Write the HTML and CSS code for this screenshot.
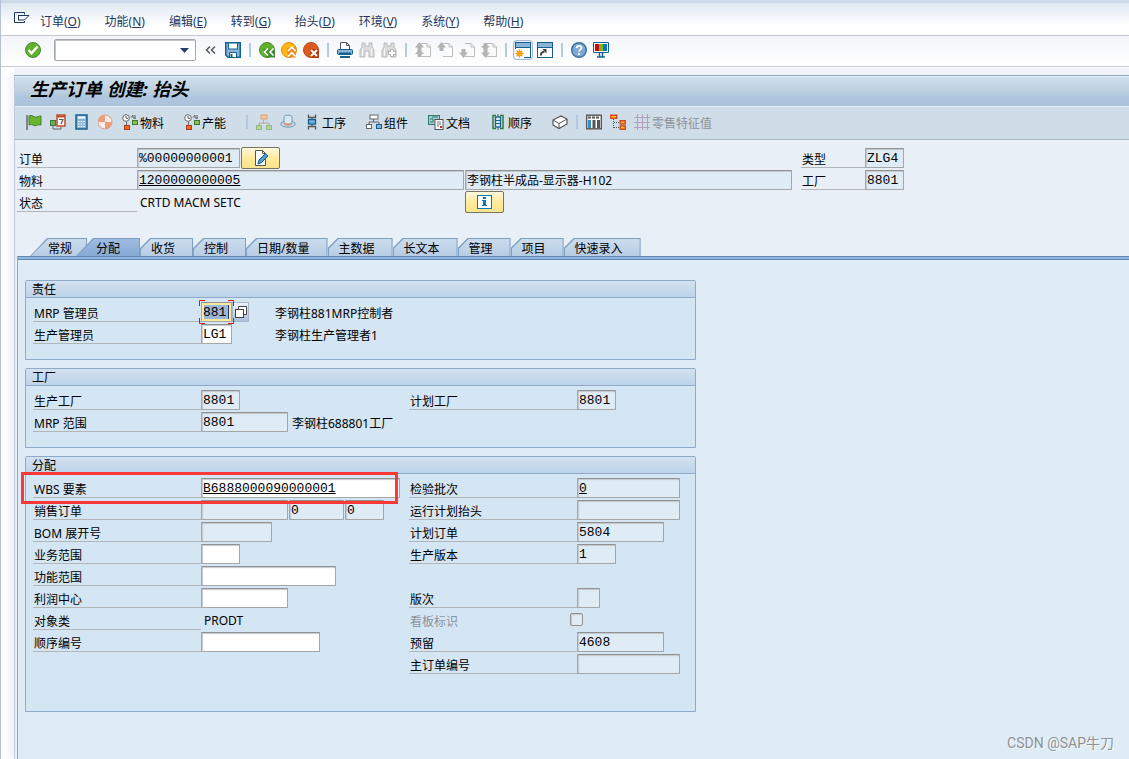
FILE: index.html
```html
<!DOCTYPE html>
<html lang="zh-CN">
<head>
<meta charset="utf-8">
<title>生产订单 创建: 抬头</title>
<link rel="stylesheet" href="styles.css">
</head>
<body>
<svg class="defs" width="0" height="0" aria-hidden="true">
  <defs>
    <g id="i-binoc"><path d="M3 1h3v3h4V1h3v4l2 3v7h-5V9H6v6H1V8l2-3z" fill="#dcdcdc" stroke="#b9b9b9"/><path d="M3.500 6v8M12.500 6v8" stroke="#f4f4f4"/></g>
    <g id="i-page"><path d="M6 1.500h6l3.500 3.500v9.500H6M12 1.500V5h3.500" fill="#fafafa" stroke="#bdbdbd"/></g>
    <g id="i-up"><path d="M4.500 0L9 5.500H6.500V9h-4V5.500H0z" fill="#b4b4b4"/></g>
    <g id="i-down"><path d="M4.500 16L0 10.500h2.500V7h4v3.500H9z" fill="#b4b4b4"/></g>
    <g id="i-capacity"><circle cx="4" cy="4" r="3.300" fill="#fff" stroke="#666"/><path d="M4 2v2.300h2" fill="none" stroke="#555"/><path d="M9 3.500l2-2.500v3M13 1v4M11 4h3M4.500 8v3" fill="none" stroke="#666"/><rect x="10.500" y="6.500" width="5" height="4" fill="#8bc34a" stroke="#3d7a33"/><rect x="2.500" y="11.500" width="5" height="4" fill="#f26a2a" stroke="#b03a12"/></g>
  </defs>
</svg>

<nav class="menubar" aria-label="菜单">
  <button class="icon-btn system" aria-label="系统菜单"><svg width="16" height="14"><path d="M10.500 2.500v-2H.5v10h10v-1.500M4 3.500h11L10.500 8H4M4.500 3.500V8" fill="none" stroke="#23365f"/></svg></button>
  <button>订单(<u>O</u>)</button>
  <button>功能(<u>N</u>)</button>
  <button>编辑(<u>E</u>)</button>
  <button>转到(<u>G</u>)</button>
  <button>抬头(<u>D</u>)</button>
  <button>环境(<u>V</u>)</button>
  <button>系统(<u>Y</u>)</button>
  <button>帮助(<u>H</u>)</button>
</nav>

<div class="toolbar">
  <button class="icon-btn enter" aria-label="回车"><svg width="16" height="16"><circle cx="8" cy="8" r="7.500" fill="#62b12b" stroke="#4a8a35"/><path d="M3.500 8l3 3.300L12.500 4.500" fill="none" stroke="#fff" stroke-width="2.400"/></svg></button>
  <div class="command">
    <input type="text" aria-label="命令">
    <svg class="arrow" width="9" height="5"><path d="M0 0h9L4.500 5z" fill="#23406b"/></svg>
  </div>
  <button class="icon-btn" aria-label="收起"><svg width="16" height="16"><path d="M7 4.500L3.500 8 7 11.500M12 4.500L8.500 8l3.500 3.500" fill="none" stroke="#555" stroke-width="1.500"/></svg></button>
  <button class="icon-btn" aria-label="保存"><svg width="16" height="16"><path d="M.75.75h14.500v14.500H3L.75 13z" fill="#8ab4d8" stroke="#14618f" stroke-width="1.500"/><rect x="3.500" y="1" width="9" height="6" fill="#fff" stroke="#14618f"/><path d="M4.500 15v-4.500h7V15" fill="#fff" stroke="#14618f"/><path d="M6.500 12v3" stroke="#14618f" stroke-width="2"/></svg></button>
  <span class="sep"></span>
  <button class="icon-btn" aria-label="返回"><svg width="16" height="16"><circle cx="8" cy="8" r="7.500" fill="#62b12b" stroke="#4a8a35"/><path d="M4 7h12v8.500H8z" fill="#3f8a2c"/><path d="M9 6.500L5.500 10 9 13.500M14.500 6.500L11 10l3.500 3.500" fill="none" stroke="#fff" stroke-width="1.700"/></svg></button>
  <button class="icon-btn" aria-label="退出"><svg width="16" height="16"><circle cx="8" cy="8" r="7.500" fill="#fdb813" stroke="#e08a12"/><path d="M6 6l9-1v10.500H7z" fill="#ef8b1c"/><path d="M7 9l3.800-3.800L14.600 9M7 14.500l3.800-3.800 3.800 3.800" fill="none" stroke="#fff" stroke-width="1.700"/></svg></button>
  <button class="icon-btn" aria-label="取消"><svg width="16" height="16"><circle cx="8" cy="8" r="7.500" fill="#dd5a1e" stroke="#b84a1c"/><path d="M7 7h9v9H8z" fill="#b83a12"/><path d="M8 8l6 6M14 8l-6 6" stroke="#fff" stroke-width="2"/></svg></button>
  <span class="sep"></span>
  <button class="icon-btn" aria-label="打印"><svg width="16" height="16"><path d="M3.500 8V.5h6l3 3V8M9.500.5v3h3" fill="#fff" stroke="#555"/><rect x=".5" y="7.500" width="15" height="5" rx="1" fill="#8ab4d8" stroke="#14618f"/><path d="M2 11.500h12M3 15h10" stroke="#14618f" stroke-width="2"/></svg></button>
  <button class="icon-btn" aria-label="查找"><svg width="16" height="16"><use href="#i-binoc"/></svg></button>
  <button class="icon-btn" aria-label="查找下一个"><svg width="16" height="16"><use href="#i-binoc"/><path d="M11 7v8M7 11h8" stroke="#b4b4b4" stroke-width="4"/><path d="M11 8v6M8 11h6" stroke="#fff" stroke-width="2"/></svg></button>
  <span class="sep"></span>
  <button class="icon-btn" aria-label="首页"><svg width="16" height="16"><use href="#i-page"/><use href="#i-up"/><path d="M4.500 7L9 12H6.500v3h-4v-3H0z" fill="#b4b4b4"/></svg></button>
  <button class="icon-btn" aria-label="上一页"><svg width="16" height="16"><use href="#i-page"/><use href="#i-up"/></svg></button>
  <button class="icon-btn" aria-label="下一页"><svg width="16" height="16"><use href="#i-page"/><use href="#i-down"/></svg></button>
  <button class="icon-btn" aria-label="末页"><svg width="16" height="16"><use href="#i-page"/><use href="#i-down"/><path d="M4.500 9L0 4h2.500V1h4v3H9z" fill="#b4b4b4"/></svg></button>
  <span class="sep"></span>
  <button class="icon-btn framed" aria-label="新建会话"><svg width="16" height="16"><rect x=".5" y=".5" width="15" height="15" fill="#fff" stroke="#14618f"/><path d="M1 3h14" stroke="#8ab4d8" stroke-width="4"/><path d="M1 5.500h14" stroke="#14618f"/><path d="M0 7h9v9H0z" fill="#fff"/><path d="M4.500 7.500v8M.5 11.500h8M1.700 8.700l5.600 5.600M7.300 8.700l-5.600 5.600" stroke="#f39200" stroke-width="1.300"/><circle cx="4.500" cy="11.500" r="2.500" fill="#f7a600"/></svg></button>
  <button class="icon-btn" aria-label="创建快捷方式"><svg width="16" height="16"><rect x=".5" y=".5" width="15" height="15" fill="#fff" stroke="#14618f"/><path d="M1 3h14" stroke="#8ab4d8" stroke-width="4"/><path d="M1 5.500h14" stroke="#14618f"/><path d="M4 13.500c-.5-2 1-3.500 3.500-4" fill="none" stroke="#444" stroke-width="2"/><path d="M5.500 7h4v4.500z" fill="#444"/></svg></button>
  <span class="sep"></span>
  <button class="icon-btn" aria-label="帮助"><svg width="16" height="16"><circle cx="8" cy="8" r="7.300" fill="#7ea9d0" stroke="#35719f" stroke-width="1.400"/><path d="M5.500 6.300C5.500 3 10.800 3.200 10.500 6c-.2 1.700-2.500 1.600-2.500 3.500M8 11v2" fill="none" stroke="#fff" stroke-width="1.800"/></svg></button>
  <button class="icon-btn" aria-label="定制布局"><svg width="16" height="16"><path d="M.5.5h15v10H.5z" fill="#fff" stroke="#14618f"/><path d="M2 2h4v7H2z" fill="#cc0a0a"/><path d="M6 2h4v7H6z" fill="#79b51c"/><path d="M10 2h4v7h-4z" fill="#0b76c8"/><path d="M6.500 11v4M9.500 11v4M4 15h8" stroke="#14618f" stroke-width="1.500"/></svg></button>
</div>

<main class="window">
  <h1>生产订单 创建: 抬头</h1>

  <div class="appbar">
    <button aria-label="下达"><svg width="16" height="16"><path d="M1 1v15" stroke="#666" stroke-width="1.500"/><path d="M3 2c3-2 5 2 8 1 2-1 3-1 4-1v9c-4-1-5 2-8 0-2-1-3 0-4 0z" fill="#6ab52b" stroke="#3e8432"/></svg></button>
    <button aria-label="计划"><svg width="16" height="16"><path d="M3 12v3h8v-2" fill="none" stroke="#666"/><rect x=".5" y="6.500" width="5" height="5" fill="#6ab04a" stroke="#3c7a3a"/><rect x="7" y="1" width="8" height="11" fill="#fff" stroke="#c2492b" stroke-width="1.500"/><path d="M7 2.500h8" stroke="#c2492b" stroke-width="2"/><path d="M9 5.500h4L11 10" fill="none" stroke="#555" stroke-width="1.200"/></svg></button>
    <button aria-label="成本核算"><svg width="16" height="16"><rect x="2" y="1" width="11" height="14" fill="#8ab4d8" stroke="#14618f" stroke-width="1.500"/><path d="M4 3.500h7" stroke="#fff" stroke-width="2"/><path d="M4 7.500h7M4 10h7M4 12.500h7" stroke="#fff" stroke-width="1.200" stroke-dasharray="1.600 1"/></svg></button>
    <button aria-label="结算"><svg width="16" height="16"><circle cx="7" cy="8" r="7" fill="#fbeee8" stroke="#cf9a86"/><path d="M7 8H0a7 7 0 0 1 7-7zM7 8h7a7 7 0 0 1-7 7z" fill="#ec9c79"/></svg></button>
    <button class="wide"><svg width="16" height="16"><use href="#i-capacity"/></svg>物料</button>
    <button class="wide"><svg width="16" height="16"><use href="#i-capacity"/></svg>产能</button>
    <span class="sep"></span>
    <button aria-label="层次"><svg width="16" height="16"><path d="M7.500 6v3M3 12V9h10v3" fill="none" stroke="#b5aaa0"/><rect x="5" y="1" width="6" height="4" fill="#f5c79a" stroke="#dba27c"/><rect x=".5" y="11.500" width="5" height="4" fill="#b5d39b" stroke="#93bb80"/><rect x="10.500" y="11.500" width="5" height="4" fill="#b5d39b" stroke="#93bb80"/></svg></button>
    <button aria-label="抬头"><svg width="16" height="16"><ellipse cx="8" cy="10" rx="7.300" ry="3.200" fill="#c3dceb" stroke="#6d9ab8"/><path d="M4 9V3c0-2.500 8-2.500 8 0v6" fill="#d6e8f2" stroke="#6d9ab8"/><path d="M4 8.500c2 1.500 6 1.500 8 0v2c-2 1.500-6 1.500-8 0z" fill="#e08a74"/></svg></button>
    <button class="wide"><svg width="16" height="16"><path d="M8 4v9" stroke="#555"/><path d="M4.500.5v3h7v-3M4.500 15.500v-3h7v3" fill="none" stroke="#555" stroke-width="1.300"/><rect x="4.500" y="5.500" width="7" height="4.500" fill="#6eb0db" stroke="#14618f" stroke-width="1.300"/></svg>工序</button>
    <button class="wide"><svg width="16" height="16"><path d="M7.500 5v3M3 11V8h10v3" fill="none" stroke="#666"/><rect x="4" y="1" width="8" height="4" fill="#fff" stroke="#666"/><rect x=".5" y="10.500" width="5" height="4" fill="#fff" stroke="#666"/><rect x="10.500" y="10.500" width="5" height="4" fill="#7fb4da" stroke="#14618f"/></svg>组件</button>
    <button class="wide"><svg width="16" height="16"><rect x=".5" y="1.500" width="11" height="9" fill="#a9cbd3" stroke="#2f7d6c"/><path d="M2 5h3v3H2M4 3h6" fill="none" stroke="#2f7d6c"/><rect x="7" y="5.500" width="8" height="10" fill="#fff" stroke="#555"/><path d="M9 8h4M9 10h4M9 12h2" stroke="#777"/><path d="M12 13h2" stroke="#d22" stroke-width="2"/></svg>文档</button>
    <button class="wide"><svg width="16" height="16"><path d="M6 1.500H3v13h3M10 1.500h3v13h-3" fill="none" stroke="#2f7d3c" stroke-width="1.500"/><path d="M8 0v16" stroke="#555"/><rect x="5.500" y="3" width="5" height="10" fill="#dcecf6" stroke="#14618f" stroke-width="1.300"/><path d="M5.500 6.500h5M5.500 9.500h5" stroke="#14618f"/></svg>顺序</button>
    <button aria-label="物料清单"><svg width="16" height="16"><path d="M1 6l8-4 6 3v5l-8 4.500L1 11z" fill="#fff" stroke="#555" stroke-width="1.200"/><path d="M1 6l6 3.500L15 5M7 9.500v5" fill="none" stroke="#555"/></svg></button>
    <span class="sep"></span>
    <button aria-label="列表"><svg width="16" height="16"><rect x=".7" y="1.200" width="14.600" height="13.600" fill="#fff" stroke="#555" stroke-width="1.400"/><path d="M2 3.500h12" stroke="#555" stroke-width="2" stroke-dasharray="3 1"/><path d="M3.500 6v8" stroke="#3b8dbd" stroke-width="3"/><path d="M8 6v8M12.500 6v8" stroke="#555" stroke-width="3"/></svg></button>
    <button aria-label="结构"><svg width="16" height="16"><path d="M3.500 5v9M4 8.500h6M4 13.500h6" stroke="#555" stroke-dasharray="1 1"/><rect x=".7" y="1.200" width="6" height="3" fill="#fcc21b" stroke="#d2451e" stroke-width="1.400"/><rect x="10.200" y="6.700" width="5" height="3.300" fill="#fcc21b" stroke="#d2451e" stroke-width="1.400"/><rect x="10.200" y="12" width="5" height="3.300" fill="#fcc21b" stroke="#d2451e" stroke-width="1.400"/></svg></button>
    <button class="wide" disabled><svg width="16" height="16"><path d="M3.500 0v16M8.500 0v16M13.500 0v16M0 3.500h16M0 8.500h16M0 13.500h16" stroke="#b3a0bd"/></svg>零售特征值</button>
  </div>

  <section class="header">
    <div class="col">
      <div class="row"><label class="short" for="order">订单</label><input class="c12" id="order" value="%00000000001" readonly><button class="yellow" aria-label="长文本"><svg width="16" height="16"><path d="M2.500.500h7l3 3v12h-10z" fill="#fff" stroke="#555"/><path d="M9.500.5v3h3" fill="none" stroke="#555"/><path d="M5 14l1-4 6.500-6.500 2.500 2.500L8.500 12.500z" fill="#4f9ccc" stroke="#14618f"/></svg></button></div>
      <div class="row"><label class="short" for="material">物料</label><input class="c40 link" id="material" value="1200000000005" readonly><input class="c40 text" aria-label="物料描述" value="李钢柱半成品-显示器-H102" readonly></div>
      <div class="row"><label class="short" for="status">状态</label><output class="c40" id="status">CRTD MACM SETC</output><button class="yellow" aria-label="状态信息"><svg width="15" height="14"><rect x=".5" y=".5" width="14" height="13" fill="#fff" stroke="#0b78b8"/><path d="M6 2h3v2H6zM5 5h4v5h1v1H5v-1h1V6H5z" fill="#0b78b8"/></svg></button></div>
    </div>
    <div class="col">
      <div class="row"><label class="tiny" for="type">类型</label><input class="c4" id="type" value="ZLG4" readonly></div>
      <div class="row"><label class="tiny" for="plant">工厂</label><input class="c4" id="plant" value="8801" readonly></div>
    </div>
  </section>

  <div class="tabs" role="tablist">
    <button role="tab" class="first"><span>常规</span></button>
    <button role="tab" class="active" aria-selected="true"><span>分配</span></button>
    <button role="tab"><span>收货</span></button>
    <button role="tab"><span>控制</span></button>
    <button role="tab"><span>日期/数量</span></button>
    <button role="tab"><span>主数据</span></button>
    <button role="tab"><span>长文本</span></button>
    <button role="tab"><span>管理</span></button>
    <button role="tab"><span>项目</span></button>
    <button role="tab"><span>快速录入</span></button>
  </div>

  <div class="panel">
    <section class="group">
      <h2>责任</h2>
      <div class="body">
        <div class="row">
          <label for="mrp">MRP 管理员</label>
          <div class="focus"><input class="c3" id="mrp" value="881"><svg width="35" height="24"><path d="M.5 6V.5H6M29 .5h5.500V6M34.500 18v5.500H29M6 23.500H.5V18" fill="none" stroke="#e01010"/></svg></div>
          <button class="f4" aria-label="搜索帮助"><svg width="12" height="12"><path d="M3.500 3.500v-3h8v8h-3" fill="#fff" stroke="#444"/><rect x=".5" y="3.500" width="8" height="8" fill="#fff" stroke="#444"/></svg></button>
          <span class="note far">李钢柱881MRP控制者</span>
        </div>
        <div class="row"><label for="sched">生产管理员</label><input class="c3" id="sched" value="LG1"><span class="note farther">李钢柱生产管理者1</span></div>
      </div>
    </section>

    <section class="group">
      <h2>工厂</h2>
      <div class="body cols">
        <div class="col">
          <div class="row"><label for="pplant">生产工厂</label><input class="c4" id="pplant" value="8801" readonly></div>
          <div class="row"><label for="area">MRP 范围</label><input class="c10" id="area" value="8801" readonly><span class="note">李钢柱688801工厂</span></div>
        </div>
        <div class="col">
          <div class="row"><label for="plplant">计划工厂</label><input class="c4" id="plplant" value="8801" readonly></div>
        </div>
      </div>
    </section>

    <section class="group last">
      <h2>分配</h2>
      <div class="body cols">
        <div class="col">
          <div class="row marked"><label for="wbs">WBS 要素</label><input class="c24 link" id="wbs" value="B6888000090000001"></div>
          <div class="row"><label for="sales">销售订单</label><input class="c10" id="sales" readonly><input class="c6" aria-label="销售订单项目" value="0" readonly><input class="c4" aria-label="计划行" value="0" readonly></div>
          <div class="row"><label for="bom">BOM 展开号</label><input class="c8" id="bom" readonly></div>
          <div class="row"><label for="barea">业务范围</label><input class="c4" id="barea"></div>
          <div class="row"><label for="farea">功能范围</label><input class="c16" id="farea"></div>
          <div class="row"><label for="profit">利润中心</label><input class="c10" id="profit"></div>
          <div class="row"><label for="oclass">对象类</label><output class="c16" id="oclass">PRODT</output></div>
          <div class="row"><label for="seq">顺序编号</label><input class="c14" id="seq"></div>
        </div>
        <div class="col">
          <div class="row"><label for="lot">检验批次</label><input class="c12 link" id="lot" value="0" readonly></div>
          <div class="row"><label for="run">运行计划抬头</label><input class="c12" id="run" readonly></div>
          <div class="row"><label for="planned">计划订单</label><input class="c10" id="planned" value="5804" readonly></div>
          <div class="row"><label for="version">生产版本</label><input class="c4" id="version" value="1" readonly></div>
          <div class="row"></div>
          <div class="row"><label for="rev">版次</label><input class="c2" id="rev" readonly></div>
          <div class="row"><label class="off" for="kanban">看板标识</label><input type="checkbox" id="kanban" disabled></div>
          <div class="row"><label for="resv">预留</label><input class="c10" id="resv" value="4608" readonly></div>
          <div class="row"><label for="lead">主订单编号</label><input class="c12" id="lead" readonly></div>
        </div>
      </div>
    </section>
  </div>
</main>
<div class="watermark">CSDN @SAP牛刀</div>
</body>
</html>
```
FILE: styles.css
```css
*, *::before, *::after { box-sizing: border-box; }

body {
  margin: 0;
  min-height: 100vh;
  display: flex;
  flex-direction: column;
  position: relative;
  border-left: 1px solid #b4c0d4;
  background: #fff;
  color: #000;
  font: 12px/16px "Noto Sans", "Noto Sans CJK SC", sans-serif;
}

.defs { position: absolute; }
svg { display: block; flex: none; }

button {
  margin: 0;
  padding: 0;
  border: 0;
  background: none;
  color: inherit;
  font: inherit;
  white-space: nowrap;
}

/* Menu bar */
.menubar {
  display: flex;
  align-items: center;
  gap: 24px;
  height: 36px;
  padding: 6px 13px 0;
  border-top: 3px solid #cdd9e8;
  border-bottom: 1px solid #c3c7d0;
  background: linear-gradient(#dfe8f2, #fff 70%);
  color: #23365f;
}
.menubar .system { margin: 0 -14px 6px 0; }

/* Standard toolbar */
.toolbar {
  display: flex;
  align-items: center;
  gap: 6px;
  height: 31px;
  padding: 0 24px 2px;
  border-bottom: 1px solid #c5cdd8;
  background: linear-gradient(#f3f5f9, #fff);
}
.icon-btn { width: 16px; }
.enter { margin-right: 7px; }
.command { position: relative; margin-right: 1px; }
.command input {
  display: block;
  width: 142px;
  height: 22px;
  border: 1px solid #a3a6aa;
  border-radius: 2px;
  background: #fff;
  box-shadow: inset 1px 1px 0 #c3c6ca;
}
.arrow { position: absolute; right: 7px; top: 9px; }
.toolbar .sep {
  width: 2px;
  height: 14px;
  margin: 0 2px;
  background: #b4cbe2;
}
.framed {
  border-radius: 2px;
  background: #e8eef8;
  box-shadow: 0 0 0 1px #e8eef8, 0 0 0 2px #a9b8d6;
}

/* Transaction window */
.window {
  flex: 1;
  display: flex;
  flex-direction: column;
  margin: 8px 0 0 13px;
  border-top: 1px solid #92a5bd;
  border-left: 1px solid #c0ccd9;
  background: #e8eff7;
  box-shadow: 0 -7px 0 #f0f4fa, -6px 0 6px #f1f4fa;
}
h1 {
  margin: 0;
  height: 31px;
  padding: 0 15px;
  border-top: 1px solid #e4eef6;
  border-bottom: 1px solid #e8f0f7;
  background: linear-gradient(#cfdfed, #bed1e0 45%, #aec6de 70%, #adc3dc);
  font: italic bold 18px/24px "Noto Sans", "Noto Sans CJK SC", sans-serif;
}

.appbar {
  display: flex;
  align-items: center;
  gap: 8px;
  height: 33px;
  padding: 0 11px 3px;
  border-bottom: 1px solid #a9b9c6;
  background: #cfdde8;
}
.appbar .wide {
  display: flex;
  align-items: flex-start;
  gap: 2px;
  height: 16px;
  margin-right: 12px;
  line-height: 20px;
}
.appbar .sep { width: 2px; height: 14px; background: #b4c9de; }
.appbar button:disabled { color: #8d9297; }

/* Form rows */
.row {
  position: relative;
  display: flex;
  align-items: flex-end;
  gap: 1px;
  height: 22px;
}
.row label {
  width: 168px;
  height: 20px;
  margin-right: -1px;
  padding: 3px 1px 0;
  border-bottom: 1px solid #b3b6b8;
  line-height: 18px;
  white-space: nowrap;
}
.row .short { width: 120px; padding-left: 2px; }
.row .tiny { width: 64px; }
.row .off { border-color: transparent; color: #8d9499; }

.row input {
  height: 20px;
  margin: 0;
  padding: 0 1px;
  border: 1px solid #a4a6a8;
  border-top-color: #8f9193;
  border-radius: 1px;
  outline: 0;
  background: #fff;
  box-shadow: inset 1px 1px 1px #c4c8cc;
  color: #000;
  font: 13px/18px "Liberation Mono", "Noto Sans CJK SC", monospace;
}
.row input[readonly] { background: #dfebf5; }
.row .text { font: 12px/18px "Noto Sans", "Noto Sans CJK SC", sans-serif; }
.row .link { text-decoration: underline; }
.row output { padding: 0 3px 1px; }
.row input[type="checkbox"] {
  appearance: none;
  width: 13px;
  height: 13px;
  margin: 0 0 4px -7px;
  border-color: #8f9193;
  border-radius: 2px;
  background: #dfebf5;
}
.note { padding: 0 3px; white-space: nowrap; }
.far { margin-left: 22px; }
.farther { margin-left: 39px; }

.c2 { width: 23px; }
.c3 { width: 31px; }
.c4 { width: 39px; }
.c6 { width: 55px; }
.c8 { width: 71px; }
.c10 { width: 87px; }
.c12 { width: 103px; }
.c14 { width: 119px; }
.c16 { width: 135px; }
.c24 { width: 199px; }
.c40 { width: 327px; }

.yellow {
  display: grid;
  place-items: center;
  width: 39px;
  height: 22px;
  margin-bottom: -1px;
  border: 1px solid #77745f;
  border-radius: 2px;
  background: linear-gradient(#fff9dc, #ffeb9c 50%, #fbe38c);
}

/* Focused field with its search help */
.focus { position: relative; z-index: 1; height: 20px; }
.focus svg { position: absolute; left: -2px; top: -2px; }
.row .focus input {
  display: block;
  background: linear-gradient(90deg, #9db6d6 26px, #23365f 26px, #23365f 27px, #9db6d6 27px);
  box-shadow: inset 0 0 0 2px #fbeaa0;
}
.f4 {
  display: grid;
  place-items: center;
  width: 17px;
  height: 20px;
  margin-left: -1px;
  border: 1px solid #a9b6c8;
  background: linear-gradient(#eef3f9, #a9bfdc);
}

.header {
  display: grid;
  grid-template-columns: 784px 1fr;
  padding: 6px 2px 26px;
}

/* Tab strip */
.tabs { display: flex; padding-left: 15px; height: 18px; }
.tabs button {
  position: relative;
  height: 18px;
  padding: 0 18px 0 11px;
}
.tabs button::before,
.tabs button::after {
  content: "";
  position: absolute;
  inset: 0;
  background: #7e9fc4;
  clip-path: polygon(0 10px, 10px 0, 100% 0, 100% 100%, 0 100%);
}
.tabs button::after {
  inset: 1px 1px 0;
  background: linear-gradient(#cbdced, #b7cde5);
}
.tabs span { position: relative; z-index: 1; line-height: 22px; }
.tabs .first { padding: 0 15px 0 18px; }
.tabs .active { margin-left: -11px; padding: 0 20px; }
.tabs .first::before, .tabs .first::after,
.tabs .active::before, .tabs .active::after {
  clip-path: polygon(0 100%, 17px 0, 100% 0, 100% 100%);
}
.tabs .active::after { background: linear-gradient(#9dbbdf, #86a9d6); }

.panel {
  flex: 1;
  display: flex;
  flex-direction: column;
  gap: 8px;
  margin-left: 2px;
  padding: 24px 8px 0 7px;
  border-left: 1px solid #8aa9cb;
  background: linear-gradient(#5f86b5 1px, #94b6de 1px, #94b6de 3px, #5f86b5 3px, #5f86b5 4px, #dfebf5 4px);
}

.group {
  width: 100%;
  max-width: 671px;
  border: 1px solid #8dabc9;
  border-radius: 2px 2px 0 0;
  background: #d4e5f3;
}
h2 {
  margin: 0;
  height: 17px;
  padding: 0 6px;
  border-bottom: 1px solid #8dabc9;
  background: linear-gradient(#d3e1f0, #bed3e9);
  font: 12px/17px "Noto Sans", "Noto Sans CJK SC", sans-serif;
}
.body { padding: 2px 7px 15px; }
.last .body { padding-bottom: 37px; }
.cols { display: grid; grid-template-columns: 376px 1fr; }

/* Red highlight drawn around the WBS row */
.marked::after {
  content: "";
  position: absolute;
  left: -12px;
  top: -4px;
  width: 377px;
  height: 32px;
  border: 3px solid #fb3838;
}
.marked { z-index: 1; }

.watermark {
  position: absolute;
  right: 15px;
  bottom: 6px;
  color: #8d9296;
  font: 14px/20px Roboto, "Noto Sans CJK SC", sans-serif;
  text-shadow: 1px 1px 0 #f5f9fc;
}
```
